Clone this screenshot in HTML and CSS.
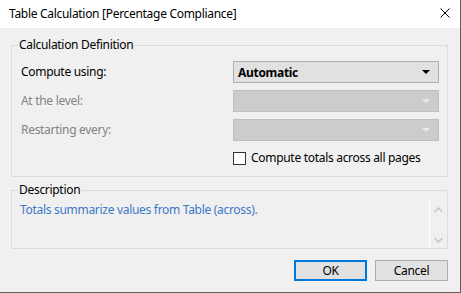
FILE: index.html
```html
<!DOCTYPE html>
<html lang="en">
<head>
<meta charset="UTF-8">
<title>Table Calculation</title>
<link rel="stylesheet" href="styles.css">
</head>
<body>

<!-- Dialog window -->
<div class="window">

  <div class="titlebar">
    <span class="title">Table Calculation [Percentage Compliance]</span>
    <span class="close">
      <svg width="10" height="10" viewBox="0 0 10 10"><path d="M0.5 0.5 L9.5 9.5 M9.5 0.5 L0.5 9.5" stroke="#000" stroke-width="1" fill="none"/></svg>
    </span>
  </div>

  <div class="content">

    <fieldset class="group">
      <legend>Calculation Definition</legend>
      <div class="grid">
        <label class="lbl">Compute using:</label>
        <div class="combo">
          <span class="combo-text">Automatic</span>
          <span class="arrow"></span>
        </div>

        <label class="lbl disabled">At the level:</label>
        <div class="combo off"><span class="arrow"></span></div>

        <label class="lbl disabled">Restarting every:</label>
        <div class="combo off"><span class="arrow"></span></div>

        <span></span>
        <label class="check"><span class="box"></span>Compute totals across all pages</label>
      </div>
    </fieldset>

    <fieldset class="group desc">
      <legend>Description</legend>
      <div class="desc-body">
        <div class="desc-text">Totals summarize values from Table (across).</div>
        <div class="scroll">
          <svg width="9" height="6" viewBox="0 0 9 6"><path d="M0.5 5 L4.5 1 L8.5 5" stroke="#c4c4c4" stroke-width="1.5" fill="none"/></svg>
          <svg width="9" height="6" viewBox="0 0 9 6"><path d="M0.5 1 L4.5 5 L8.5 1" stroke="#c4c4c4" stroke-width="1.5" fill="none"/></svg>
        </div>
      </div>
    </fieldset>

    <div class="buttons">
      <button class="btn default">OK</button>
      <button class="btn">Cancel</button>
    </div>

  </div>
</div>

</body>
</html>
```

FILE: styles.css
```css
/* Page */
html, body {
  margin: 0;
  padding: 0;
  background: #f0f0f0;
}

body {
  font-family: "Noto Sans", "Open Sans", sans-serif;
  font-size: 12px;
  letter-spacing: -0.3px;
  color: #000;
}

/* Window */
.window {
  width: 460px;
  height: 292px;
  background: #f0f0f0;
  border-right: 1px solid #5f5f5f;
  border-bottom: 1px solid #5f5f5f;
  display: flex;
  flex-direction: column;
}

.titlebar {
  height: 28px;
  background: #fff;
  display: flex;
  align-items: center;
  padding-left: 9px;
  padding-right: 10px;
}

.title {
  flex: 1;
  margin-top: -1px;
}

.close {
  display: flex;
  margin-top: -2px;
}

.content {
  padding: 9px 12px 0 11px;
}

/* Group boxes */
.group {
  margin: 0;
  border: 1px solid #dcdcdc;
  padding: 8px 8px 10px 9px;
  min-width: 0;
}

.group legend {
  padding: 0 1px;
  margin-left: -3px;
  line-height: 16px;
}

.grid {
  display: grid;
  grid-template-columns: 1fr 206px;
  row-gap: 7px;
  align-items: center;
}

.lbl {
  line-height: 16px;
}

.lbl.disabled {
  color: #838383;
}

/* Combo boxes */
.combo {
  height: 20px;
  border: 1px solid #adadad;
  background: #e1e1e1;
  display: flex;
  align-items: center;
  padding: 0 8px 0 4px;
}

.combo-text {
  flex: 1;
  font-weight: bold;
}

.arrow {
  margin-left: auto;
  width: 0;
  height: 0;
  border-left: 4px solid transparent;
  border-right: 4px solid transparent;
  border-top: 4px solid #000;
}

.combo.off {
  background: #cccccc;
  border-color: #bfbfbf;
}

.combo.off .arrow {
  border-top-color: #e8e8e8;
}

/* Checkbox */
.check {
  display: flex;
  align-items: center;
  gap: 5px;
  margin-top: 2px;
  line-height: 16px;
}

.box {
  width: 11px;
  height: 11px;
  border: 1px solid #333;
  background: #fff;
}

/* Description */
.desc {
  margin-top: 5px;
  padding: 0 0 0 8px;
}

.desc legend {
  margin-left: -2px;
}

.desc-body {
  display: flex;
  height: 50px;
}

.desc-text {
  flex: 1;
  color: #3b78c9;
  padding-top: 4px;
  line-height: 16px;
}

.scroll {
  width: 17px;
  border-left: 1px solid #fff;
  margin-top: 1px;
  display: flex;
  flex-direction: column;
  align-items: center;
  justify-content: space-between;
  padding: 8px 0 5px;
}

/* Buttons */
.buttons {
  display: flex;
  justify-content: flex-end;
  gap: 8px;
  margin-top: 11px;
}

.btn {
  width: 73px;
  height: 21px;
  border: 1px solid #adadad;
  background: #e1e1e1;
  font-family: inherit;
  font-size: 12px;
  letter-spacing: inherit;
  padding: 0;
  color: #000;
}

.btn.default {
  border: 2px solid #0078d7;
}
```
